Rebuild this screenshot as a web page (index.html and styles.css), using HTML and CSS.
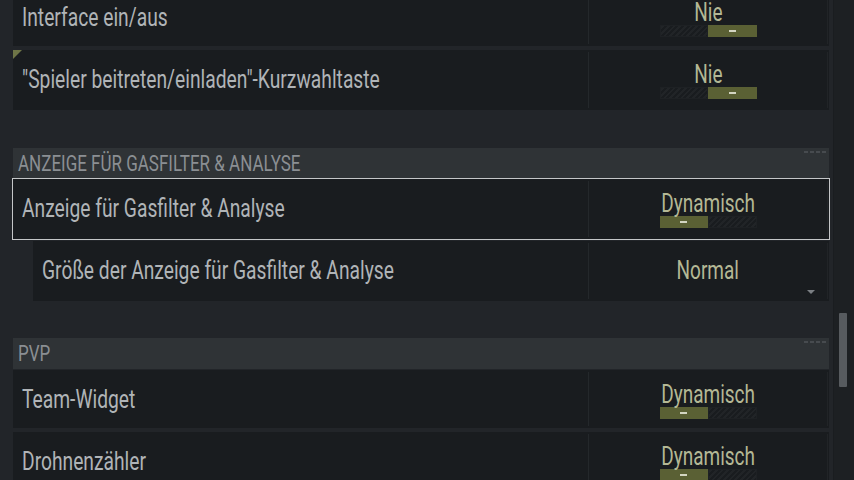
FILE: index.html
```html
<!DOCTYPE html>
<html lang="de">
<head>
<meta charset="utf-8">
<title>Einstellungen</title>
<link rel="stylesheet" href="styles.css">
</head>
<body>
<div class="page">
  <div class="list">
    <div class="row r-first">
      <div class="label"><span class="t">Interface ein/aus</span></div>
      <div class="value">
        <span class="vt">Nie</span>
        <div class="slider"><span class="off"></span><span class="on"><i class="dash"></i></span></div>
      </div>
    </div>
    <div class="row r-gap r-tall">
      <span class="flag"></span>
      <div class="label"><span class="t">"Spieler beitreten/einladen"-Kurzwahltaste</span></div>
      <div class="value">
        <span class="vt">Nie</span>
        <div class="slider"><span class="off"></span><span class="on"><i class="dash"></i></span></div>
      </div>
    </div>

    <div class="head h-first">
      <span class="ht">ANZEIGE FÜR GASFILTER &amp; ANALYSE</span>
      <span class="mark"></span>
    </div>
    <div class="row selected">
      <div class="label"><span class="t">Anzeige für Gasfilter &amp; Analyse</span></div>
      <div class="value">
        <span class="vt">Dynamisch</span>
        <div class="slider"><span class="on"><i class="dash"></i></span><span class="off"></span></div>
      </div>
    </div>
    <div class="row sub">
      <div class="label"><span class="t">Größe der Anzeige für Gasfilter &amp; Analyse</span></div>
      <div class="value drop">
        <span class="vt">Normal</span>
        <span class="caret"></span>
      </div>
    </div>

    <div class="head h-second">
      <span class="ht">PVP</span>
      <span class="mark"></span>
    </div>
    <div class="row r-after-head">
      <div class="label"><span class="t">Team-Widget</span></div>
      <div class="value">
        <span class="vt">Dynamisch</span>
        <div class="slider"><span class="on"><i class="dash"></i></span><span class="off"></span></div>
      </div>
    </div>
    <div class="row r-gap">
      <div class="label"><span class="t">Drohnenzähler</span></div>
      <div class="value">
        <span class="vt">Dynamisch</span>
        <div class="slider"><span class="on"><i class="dash"></i></span><span class="off"></span></div>
      </div>
    </div>
  </div>
  <div class="track"><div class="thumb"></div></div>
</div>
</body>
</html>
```
FILE: styles.css
```css
html, body {
  margin: 0;
  padding: 0;
}

body {
  background: #222529;
  font-family: Roboto, "Liberation Sans", sans-serif;
  width: 854px;
  height: 480px;
  overflow: hidden;
}

.page {
  display: flex;
  height: 480px;
  overflow: hidden;
}

.list {
  margin-left: 13px;
  width: 816px;
  margin-top: -12px;
  display: flex;
  flex-direction: column;
  flex-shrink: 0;
}

.row {
  display: flex;
  height: 58px;
  background: #191c1f;
  position: relative;
  flex-shrink: 0;
}

.r-gap { margin-top: 4px; }
.r-tall { height: 60px; }
.r-after-head { margin-top: 1px; }

.selected {
  margin-top: 1px;
  height: 60px;
  outline: 1px solid #c4c6c8;
}

.sub {
  margin-top: 2px;
  margin-left: 20px;
  height: 60px;
}

.label {
  flex: 1;
  padding: 16px 0 0 9px;
  min-width: 0;
}

.t {
  display: inline-block;
  font-size: 26px;
  line-height: 26px;
  transform: scaleX(0.74);
  transform-origin: left center;
  color: #b0b4b7;
  white-space: nowrap;
}

.value {
  width: 238px;
  margin: 2px 1px 2px 0;
  border-left: 1px solid #24282b;
  border-right: 1px solid #212427;
  display: flex;
  flex-direction: column;
  align-items: center;
  padding-top: 9px;
  position: relative;
}

.drop { padding-top: 14px; }

.vt {
  display: inline-block;
  font-size: 26px;
  line-height: 26px;
  transform: scaleX(0.73);
  transform-origin: center center;
  color: #b4b895;
  white-space: nowrap;
}

.slider {
  width: 97px;
  height: 12px;
  display: flex;
}

.slider .off {
  flex: 1;
  background: repeating-linear-gradient(135deg, #191c1f 0 2px, #212427 2px 4px);
  box-shadow: inset 0 0 0 1px #1e2124;
}

.slider .on {
  flex: 1;
  background: #5a6034;
  display: flex;
  align-items: center;
  justify-content: center;
}

.dash {
  display: block;
  width: 7px;
  height: 2px;
  background: #d3d5c2;
}

.head {
  height: 30px;
  background: #2f3336;
  display: flex;
  justify-content: space-between;
  align-items: flex-start;
  padding: 0 3px 0 5px;
  flex-shrink: 0;
}

.h-first { margin-top: 38px; }
.h-second { margin-top: 37px; height: 31px; }

.ht {
  display: inline-block;
  font-size: 22.5px;
  line-height: 30px;
  transform: scaleX(0.755);
  transform-origin: left center;
  color: #8b8f93;
  white-space: nowrap;
}

.mark {
  width: 22px;
  height: 2px;
  margin-top: 3px;
  background: repeating-linear-gradient(90deg, #474b4f 0 4px, transparent 4px 6px);
}

.flag {
  position: absolute;
  left: 0;
  top: 0;
  width: 0;
  height: 0;
  border-top: 9px solid #6e7547;
  border-right: 9px solid transparent;
}

.caret {
  position: absolute;
  right: 12px;
  bottom: 5px;
  width: 0;
  height: 0;
  border-left: 4px solid transparent;
  border-right: 4px solid transparent;
  border-top: 4px solid #7b7f83;
}

.track {
  margin-left: 4px;
  width: 21px;
  background: #1d2023;
  border-left: 1px solid #1a1d20;
  padding-top: 313px;
  flex-shrink: 0;
}

.thumb {
  margin-left: 5px;
  width: 8px;
  height: 74px;
  background: #575b5f;
  border-radius: 1px;
}
```
